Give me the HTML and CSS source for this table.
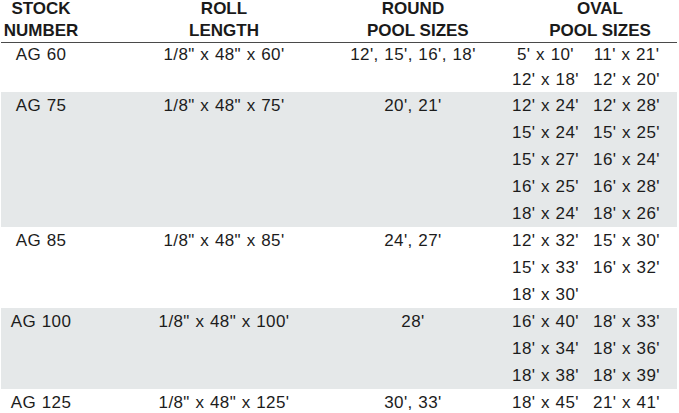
FILE: index.html
```html
<!DOCTYPE html>
<html lang="en">
<head>
<meta charset="utf-8">
<title>Pool Liner Sizes</title>
<link rel="stylesheet" href="styles.css">
</head>
<body>
<div class="table">
  <div class="row head">
    <div class="cell">STOCK<br>NUMBER</div>
    <div class="cell">ROLL<br>LENGTH</div>
    <div class="cell">ROUND<br>POOL SIZES</div>
    <div class="cell oval-head">OVAL<br>POOL SIZES</div>
  </div>
  <div class="row first">
    <div class="cell">AG 60</div>
    <div class="cell">1/8" x 48" x 60'</div>
    <div class="cell">12', 15', 16', 18'</div>
    <div class="cell oval"><span>5' x 10'</span><span>11' x 21'</span><span>12' x 18'</span><span>12' x 20'</span></div>
  </div>
  <div class="row band">
    <div class="cell">AG 75</div>
    <div class="cell">1/8" x 48" x 75'</div>
    <div class="cell">20', 21'</div>
    <div class="cell oval"><span>12' x 24'</span><span>12' x 28'</span><span>15' x 24'</span><span>15' x 25'</span><span>15' x 27'</span><span>16' x 24'</span><span>16' x 25'</span><span>16' x 28'</span><span>18' x 24'</span><span>18' x 26'</span></div>
  </div>
  <div class="row">
    <div class="cell">AG 85</div>
    <div class="cell">1/8" x 48" x 85'</div>
    <div class="cell">24', 27'</div>
    <div class="cell oval"><span>12' x 32'</span><span>15' x 30'</span><span>15' x 33'</span><span>16' x 32'</span><span>18' x 30'</span></div>
  </div>
  <div class="row band">
    <div class="cell">AG 100</div>
    <div class="cell">1/8" x 48" x 100'</div>
    <div class="cell">28'</div>
    <div class="cell oval"><span>16' x 40'</span><span>18' x 33'</span><span>18' x 34'</span><span>18' x 36'</span><span>18' x 38'</span><span>18' x 39'</span></div>
  </div>
  <div class="row">
    <div class="cell">AG 125</div>
    <div class="cell">1/8" x 48" x 125'</div>
    <div class="cell">30', 33'</div>
    <div class="cell oval"><span>18' x 45'</span><span>21' x 41'</span></div>
  </div>
</div>
</body>
</html>
```
FILE: styles.css
```css
html, body {
  margin: 0;
  padding: 0;
  background: #ffffff;
}

body {
  font-family: "Liberation Sans", Arial, sans-serif;
  color: #1c1c1c;
  overflow: hidden;
}

.table {
  width: 676px;
  margin-left: 1px;
  margin-top: -2px;
}

.row {
  display: grid;
  grid-template-columns: 80px 286px 92px 218px;
  font-size: 17px;
  line-height: 27px;
  letter-spacing: 0.4px;
  word-spacing: 0.5px;
  white-space: nowrap;
}

.cell {
  display: flex;
  flex-direction: column;
  align-items: center;
  min-width: 0;
}

.head {
  font-weight: bold;
  line-height: 22px;
  letter-spacing: 0;
  word-spacing: 0;
  color: #1a1a1a;
  border-bottom: 1.5px solid #4a4a4a;
}

.head .cell {
  display: block;
  text-align: center;
}

.head .oval-head {
  padding-left: 64px;
}

.first {
  line-height: 24.5px;
}

.band {
  background: #e5e8e9;
}

.oval {
  display: grid;
  grid-template-columns: 81px 81px;
  justify-items: center;
  align-content: start;
  padding-left: 46px;
}
```
